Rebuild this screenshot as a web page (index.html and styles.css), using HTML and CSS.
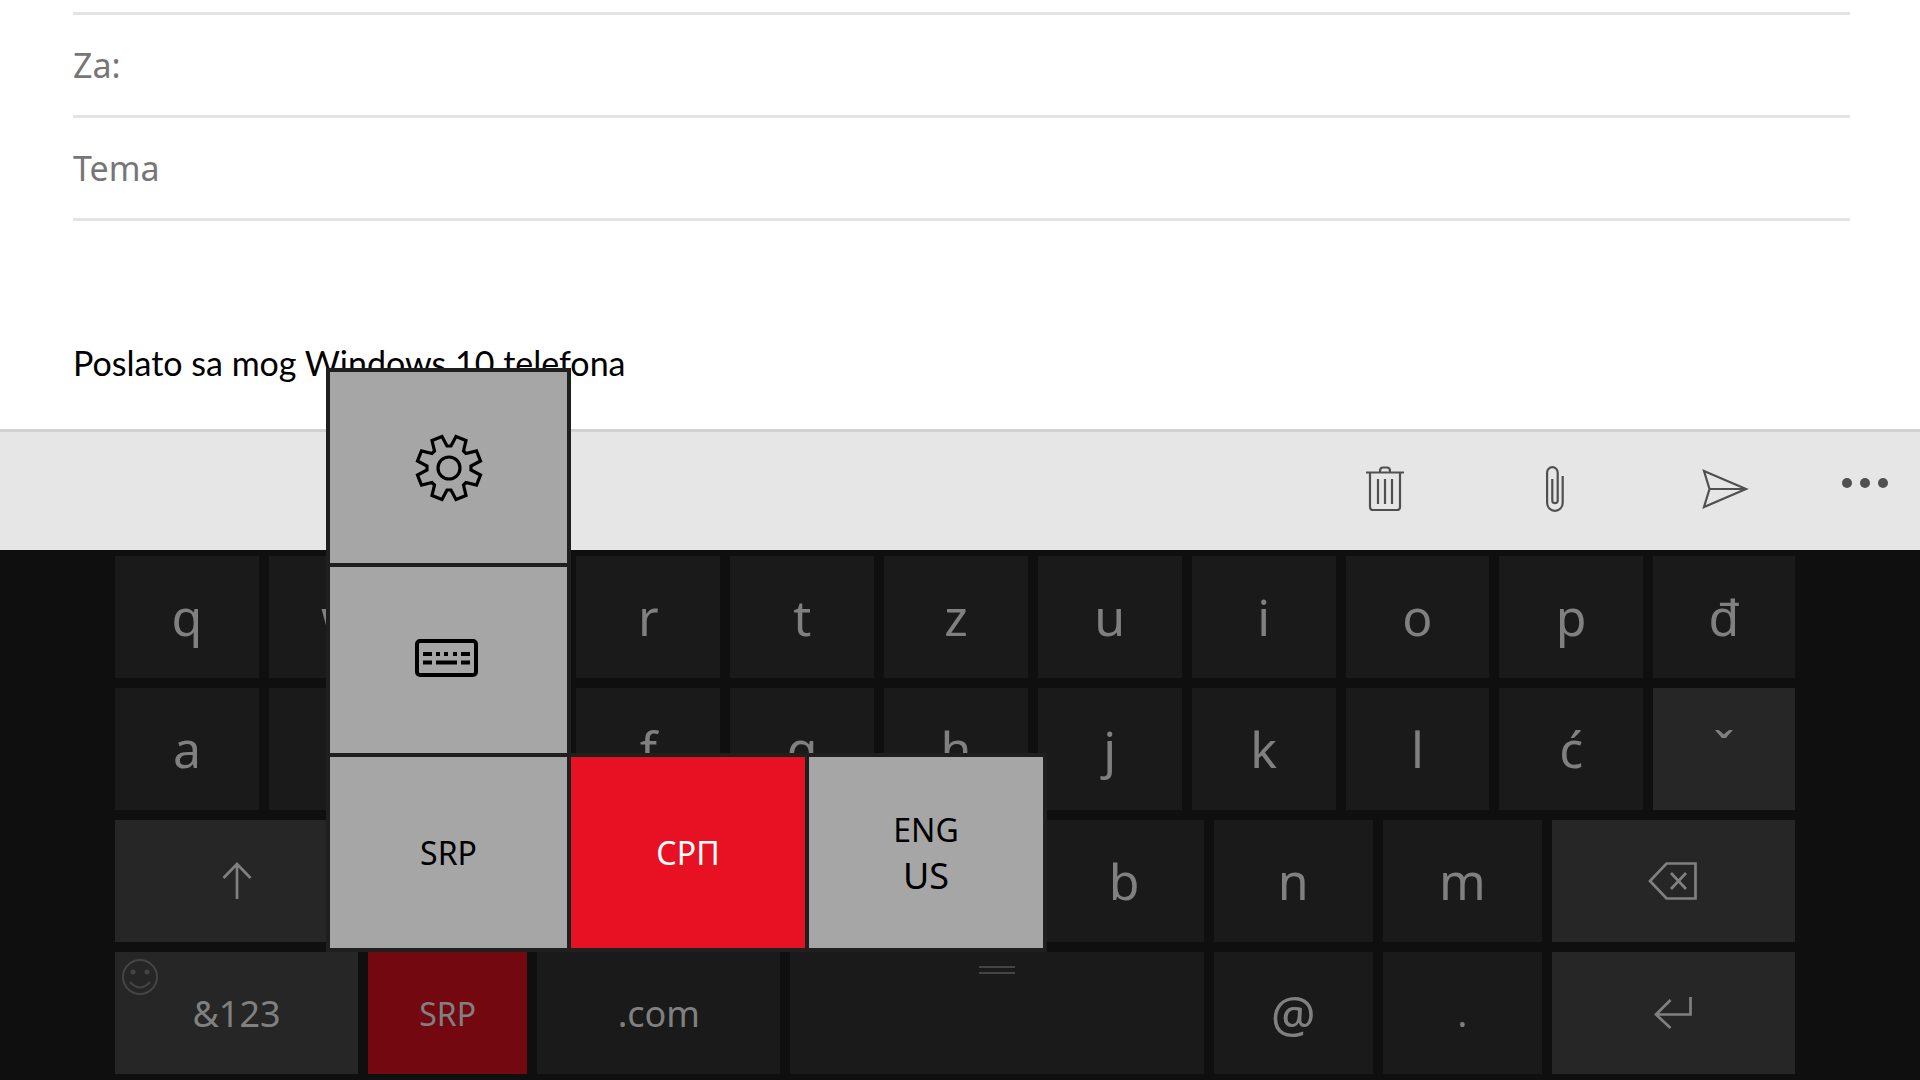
FILE: index.html
```html
<!DOCTYPE html>
<html lang="sr-Latn">
<head>
<meta charset="utf-8">
<title>Nova poruka</title>
<link rel="stylesheet" href="styles.css">
</head>
<body>
<main class="compose">
  <div class="field">
    <label for="to">Za:</label>
    <input id="to" type="text">
  </div>
  <div class="field">
    <label for="subject">Tema</label>
    <input id="subject" type="text">
  </div>
  <p class="message">Poslato sa mog Windows 10 telefona</p>
</main>
<nav class="toolbar">
  <button class="tool" type="button" aria-label="Izbriši">
    <svg width="38" height="46" viewBox="0 0 38 46" fill="none" stroke="#505050" stroke-width="2.2">
      <path d="M0 6.500H38M4 7V41Q4 44 7 44H31Q34 44 34 41V7M14 6V5Q14 1.500 17 1.500H21Q24 1.500 24 5V6M12 13V38M19 13V38M26 13V38"/>
    </svg>
  </button>
  <button class="tool" type="button" aria-label="Priloži">
    <svg width="18" height="46" viewBox="0 0 18 46" fill="none" stroke="#505050" stroke-width="2.2">
      <path d="M16.700 10V37A7.800 7.800 0 0 1 1.100 37V6.500A5.200 5.200 0 0 1 11.700 6.500V34.500A2.700 2.700 0 0 1 6.300 34.500V13"/>
    </svg>
  </button>
  <button class="tool" type="button" aria-label="Pošalji">
    <svg width="47" height="40" viewBox="0 0 47 40" fill="none" stroke="#505050" stroke-width="2.2">
      <path d="M2 2L44 20L2 38L7.500 20ZM7.500 20H44"/>
    </svg>
  </button>
  <button class="tool more" type="button" aria-label="Više">
    <svg width="46" height="10" viewBox="0 0 46 10" fill="#505050">
      <circle cx="5" cy="5" r="5"/><circle cx="23" cy="5" r="5"/><circle cx="41" cy="5" r="5"/>
    </svg>
  </button>
</nav>
<section class="keyboard" aria-label="Tastatura">
  <div class="row">
    <button class="key">q</button><button class="key">w</button><button class="key">e</button><button class="key">r</button><button class="key">t</button><button class="key">z</button><button class="key">u</button><button class="key">i</button><button class="key">o</button><button class="key">p</button><button class="key narrow">đ</button>
  </div>
  <div class="row">
    <button class="key">a</button><button class="key">s</button><button class="key">d</button><button class="key">f</button><button class="key">g</button><button class="key">h</button><button class="key">j</button><button class="key">k</button><button class="key">l</button><button class="key">ć</button><button class="key narrow special">ˇ</button>
  </div>
  <div class="row">
    <button class="key wide special" aria-label="Shift">
      <svg width="30" height="38" viewBox="0 0 30 38" fill="none" stroke="#808080" stroke-width="2.700"><path d="M15 37V2M1.500 16L15 2L28.500 16"/></svg>
    </button>
    <button class="key letter">y</button><button class="key letter">x</button><button class="key letter">c</button><button class="key letter">v</button><button class="key letter">b</button><button class="key letter">n</button><button class="key letter">m</button>
    <button class="key wide special" aria-label="Backspace">
      <svg width="50" height="38" viewBox="0 0 50 38" fill="none" stroke="#808080" stroke-width="2.700"><path d="M18.500 1.500H47.500V36.500H18.500L2 19ZM23 11L38 27M38 11L23 27"/></svg>
    </button>
  </div>
  <div class="row">
    <button class="key wide special label">
      <svg class="smiley" width="38" height="38" viewBox="0 0 38 38" fill="none" stroke="#444" stroke-width="2"><circle cx="19" cy="19" r="17"/><path d="M9 24Q19 35 29 24"/><g fill="#444" stroke="none"><circle cx="12" cy="14" r="2.500"/><circle cx="26" cy="14" r="2.500"/></g></svg>
      &amp;123
    </button>
    <button class="key letter language">SRP</button>
    <button class="key wide label">.com</button>
    <button class="key space" aria-label="Razmak">
      <svg class="grip" width="36" height="10" viewBox="0 0 36 10" stroke="#444" stroke-width="2"><path d="M0 2H36M0 8H36"/></svg>
    </button>
    <button class="key letter">@</button>
    <button class="key letter label">.</button>
    <button class="key wide special" aria-label="Enter">
      <svg width="38" height="32" viewBox="0 0 38 32" fill="none" stroke="#808080" stroke-width="2.700"><path d="M36.500 0V17.500H2M16.500 3L2 17.500L16.500 31"/></svg>
    </button>
    <div class="popup">
      <div class="popup-column">
        <button class="tile" aria-label="Podešavanja">
          <svg width="68" height="68" viewBox="-34 -34 68 68" fill="none" stroke="#000" stroke-width="3.200"><circle r="11"/><path d="M-2 -22L2 -22L7 -31.500L17 -27.500L14.500 -17L17 -14.500L27.500 -17L31.500 -7L22 -2L22 2L31.500 7L27.500 17L17 14.500L14.500 17L17 27.500L7 31.500L2 22L-2 22L-7 31.500L-17 27.500L-14.500 17L-17 14.500L-27.500 17L-31.500 7L-22 2L-22 -2L-31.500 -7L-27.500 -17L-17 -14.500L-14.500 -17L-17 -27.500L-7 -31.500Z"/></svg>
        </button>
        <button class="tile board" aria-label="Raspored tastature">
          <svg width="63" height="38" viewBox="0 0 63 38"><rect x="2" y="2" width="59" height="34" rx="3" fill="none" stroke="#000" stroke-width="4"/><path d="M8 15H17M21 15H25M29 15H33M38 15H42M46 15H55M8 23.500H17M21 23.500H42M46 23.500H55" stroke="#000" stroke-width="4"/></svg>
        </button>
      </div>
      <div class="popup-row">
        <button class="tile">SRP</button>
        <button class="tile selected">СРП</button>
        <button class="tile">ENG<span class="region">US</span></button>
      </div>
    </div>
  </div>
</section>
</body>
</html>
```
FILE: styles.css
```css
* { box-sizing: border-box; }
body {
  margin: 0;
  min-height: 100vh;
  display: flex;
  flex-direction: column;
  background: #fff;
  font-family: "Noto Sans", "Open Sans", sans-serif;
}
button {
  margin: 0;
  padding: 0;
  border: 0;
  font: inherit;
}
svg { display: block; }
.compose {
  flex: 1;
  display: flex;
  flex-direction: column;
  margin: 12px 70px 0 73px;
  border-top: 3px solid #e4e4e4;
}
.field {
  height: 103px;
  display: flex;
  align-items: center;
  gap: 12px;
  border-bottom: 3px solid #e4e4e4;
  color: #767676;
  font-size: 34px;
}
.field input {
  flex: 1;
  padding: 0;
  border: 0;
  background: none;
  color: #000;
  font: inherit;
  outline: 0;
}
.message {
  margin: 120px 0 32px;
  font-family: Lato, "Open Sans", sans-serif;
  font-size: 34px;
  line-height: 44px;
  color: #000;
}
.toolbar {
  height: 121px;
  display: flex;
  justify-content: flex-end;
  background: #e6e6e6;
  border-top: 3px solid #d2d2d2;
}
.tool {
  width: 170px;
  display: flex;
  align-items: center;
  justify-content: center;
  padding-bottom: 4px;
  background: none;
}
.more {
  width: 110px;
  padding-bottom: 16px;
}
.keyboard {
  display: flex;
  flex-direction: column;
  gap: 10px;
  padding: 6px 125px 6px 115px;
  background: #0f0f0f;
}
.row {
  position: relative;
  display: flex;
  gap: 10px;
}
.key {
  position: relative;
  flex: 144 1 0;
  min-width: 0;
  height: 122px;
  display: flex;
  align-items: center;
  justify-content: center;
  background: #1a1a1a;
  color: #808080;
  font-size: 50px;
}
.narrow { flex-grow: 142; }
.letter { flex-grow: 159; }
.wide { flex-grow: 243; }
.space { flex-grow: 413; }
.special { background: #262626; }
.label { font-size: 36px; }
.language {
  background: #730811;
  font-size: 32px;
}
.smiley {
  position: absolute;
  left: 6px;
  top: 6px;
}
.grip {
  position: absolute;
  top: 13px;
  left: 50%;
  margin-left: -18px;
}
.popup {
  position: absolute;
  left: 211px;
  bottom: 100%;
  font-size: 32px;
}
.popup-column {
  width: 245px;
  display: flex;
  flex-direction: column;
  gap: 4px;
  padding: 4px 4px 0;
  background: #1f1f1f;
}
.popup-row {
  display: flex;
  gap: 4px;
  padding: 4px;
  background: #1f1f1f;
}
.tile {
  width: 234px;
  height: 191px;
  display: flex;
  flex-direction: column;
  align-items: center;
  justify-content: center;
  background: #a6a6a6;
  color: #000;
  line-height: 46px;
}
.popup-column .tile,
.popup-row .tile:first-child { width: 237px; }
.popup-column .board {
  height: 186px;
  padding: 0 4px 4px 0;
}
.selected {
  background: #e81123;
  color: #fff;
}
.region { font-size: 36px; }
```
